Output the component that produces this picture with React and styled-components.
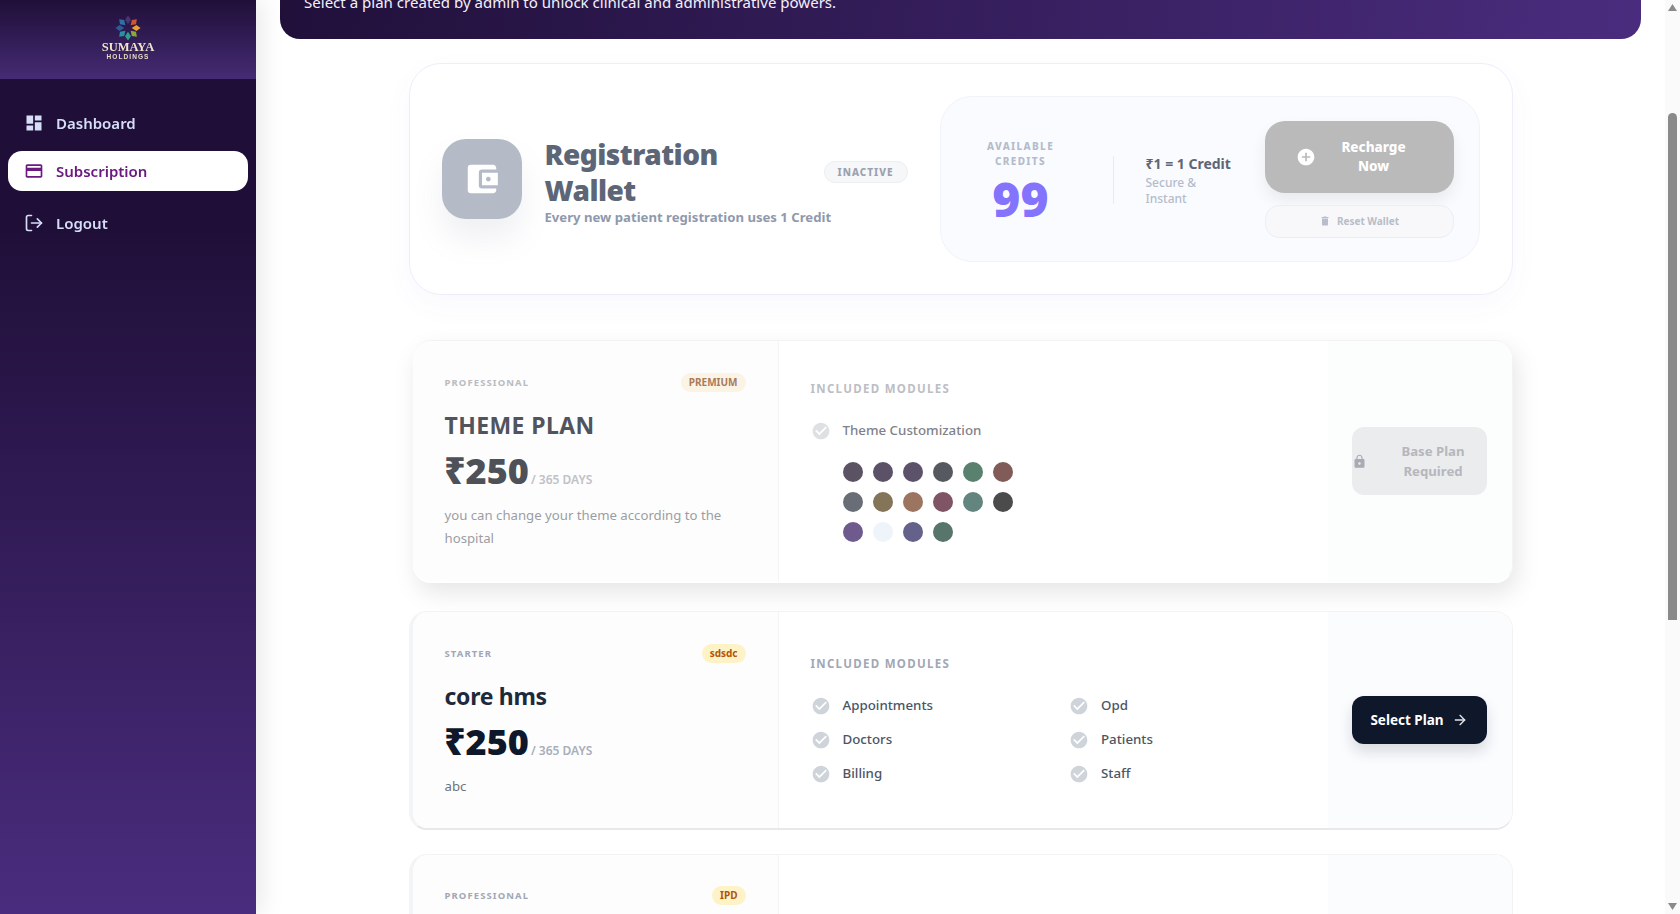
import React, { useLayoutEffect, useRef } from "react";
import styled, { createGlobalStyle } from "styled-components";
import { MdDashboard, MdCreditCard, MdAccountBalanceWallet, MdAddCircle, MdDelete, MdCheckCircle, MdLock } from "react-icons/md";
import { LogOut, ArrowRight } from "lucide-react";

const Global = createGlobalStyle`
  html, body { margin: 0; padding: 0; height: 100%; overflow: hidden; background: #fff; }
  * { box-sizing: border-box; }
  body { font-family: "Noto Sans", "Open Sans", "Liberation Sans", sans-serif; }
`;

const Shell = styled.div`
  display: flex;
  width: 1680px;
  height: 914px;
`;
const Sidebar = styled.aside`
  width: 256px;
  flex: none;
  background: linear-gradient(180deg, #1f0f38 0%, #1f0f38 25%, #4a2c7e 100%);
  box-shadow: 4px 0 24px rgba(0, 0, 0, 0.1);
  position: relative;
  z-index: 2;
`;
const Brand = styled.div`
  height: 79px;
  background: linear-gradient(180deg, #1f0f38 0%, #452b74 100%);
  display: flex;
  flex-direction: column;
  align-items: center;
  padding-top: 15px;
`;
const BrandName = styled.div`
  font-family: "Liberation Serif", serif;
  font-weight: 700;
  font-size: 12.5px;
  line-height: 13px;
  color: #f1e5c9;
`;
const BrandSub = styled.div`
  font-family: "Liberation Sans", sans-serif;
  font-weight: 700;
  font-size: 6.5px;
  line-height: 8px;
  letter-spacing: 1.1px;
  color: #e9dcc0;
  margin-top: -1px;
`;
const Nav = styled.nav`
  display: flex;
  flex-direction: column;
  padding: 24px 8px 0;
`;
const NavItem = styled.div`
  display: flex;
  align-items: center;
  gap: 12px;
  height: 40px;
  padding-left: 16px;
  border-radius: 14px;
  font-size: 15px;
  font-weight: 600;
  margin-bottom: ${(p) => p.$mb || 0}px;
  color: ${(p) => (p.$active ? "#6b1a80" : "#d6def8")};
  background: ${(p) => (p.$active ? "#fff" : "transparent")};
  svg { flex: none; }
`;
const Main = styled.main`
  flex: 1;
  min-width: 0;
  height: 914px;
  overflow-y: scroll;
  scrollbar-width: none;
  padding: 24px 24px 0;
  background: #fff;
`;
const ScrollRail = styled.div`
  width: 15px;
  flex: none;
  height: 914px;
  background: #fafafa;
  display: flex;
  flex-direction: column;
  align-items: center;
  color: #8a8a8a;
  padding-top: 4px;
`;
const ScrollThumb = styled.div`
  width: 9px;
  height: 507px;
  margin-top: 102px;
  margin-bottom: 283px;
  border-radius: 5px 5px 0 0 / 5px 5px 2px 2px;
  background: #8a8a8a;
`;
const Arrow = ({ down }) => (
  <svg width="9" height="7" viewBox="0 0 9 7" fill="currentColor">
    <path d={down ? "M0 0H9L4.5 7Z" : "M4.5 0L9 7H0Z"} />
  </svg>
);
const Banner = styled.section`
  height: 192px;
  border-radius: 20px;
  background: linear-gradient(100deg, #1f0f38 0%, #4a2c7e 100%);
  display: flex;
  align-items: flex-end;
  padding: 0 24px 26px;
  color: #f3f0fb;
  font-size: 15.05px;
  line-height: 22px;
  margin-bottom: 24px;
`;
const Column = styled.div`
  width: 1104px;
  margin: 0 auto;
  padding-bottom: 60px;
`;
const WalletCard = styled.section`
  height: 232px;
  border: 1px solid #eceffb;
  border-radius: 32px;
  background: #fff;
  box-shadow: 0 10px 30px rgba(99, 102, 241, 0.04);
  display: flex;
  align-items: center;
  justify-content: space-between;
  padding: 0 32px;
  margin-bottom: 45px;
`;
const WalletLeft = styled.div`
  display: flex;
  align-items: center;
  width: 466px;
`;
const WalletIcon = styled.div`
  width: 80px;
  height: 80px;
  flex: none;
  border-radius: 24px;
  background: #b4bac6;
  color: #fff;
  display: flex;
  align-items: center;
  justify-content: center;
  margin-right: 23px;
  box-shadow: 0 20px 30px rgba(120, 130, 160, 0.12);
`;
const WalletText = styled.div`
  flex: 1;
  min-width: 0;
  padding-top: 3px;
`;
const WalletHead = styled.div`
  display: flex;
  align-items: center;
  justify-content: space-between;
`;
const WalletTitle = styled.h2`
  margin: 0;
  font-size: 28px;
  line-height: 36px;
  font-weight: 900;
  letter-spacing: -0.5px;
  color: #5d6677;
  width: 200px;
`;
const InactivePill = styled.span`
  border: 1px solid #eceef2;
  background: #f6f7f9;
  border-radius: 999px;
  color: #9aa1b0;
  font-size: 10px;
  font-weight: 800;
  letter-spacing: 1px;
  padding: 3px 13px;
  line-height: 14px;
`;
const WalletSub = styled.div`
  font-size: 13.15px;
  line-height: 18px;
  font-weight: 700;
  color: #8f99ad;
`;
const CreditBox = styled.div`
  width: 540px;
  height: 166px;
  border: 1px solid #f1f3fa;
  border-radius: 32px;
  background: #fafbfe;
  display: flex;
  align-items: center;
  padding: 0 25px 0 32px;
`;
const Available = styled.div`
  width: 96px;
  text-align: center;
  flex: none;
  padding-top: 4px;
`;
const AvailableLabel = styled.div`
  font-size: 10px;
  line-height: 15px;
  font-weight: 800;
  letter-spacing: 1.35px;
  color: #b4bccc;
`;
const CreditValue = styled.div`
  font-size: 48px;
  line-height: 48px;
  font-weight: 900;
  color: #8473fc;
  margin-top: 6px;
`;
const Divider = styled.div`
  width: 1px;
  height: 48px;
  background: #e8eaf1;
  margin: 2px 32px 0 44px;
  flex: none;
`;
const Rate = styled.div`
  width: 119px;
  flex: none;
  padding-top: 3px;
`;
const RateTitle = styled.div`
  font-size: 14px;
  line-height: 20px;
  font-weight: 700;
  color: #5d6677;
`;
const RateSub = styled.div`
  font-size: 12px;
  line-height: 16px;
  font-weight: 500;
  color: #b4bccc;
  width: 70px;
  margin-top: 1px;
`;
const WalletActions = styled.div`
  margin-left: auto;
  width: 190px;
  display: flex;
  flex-direction: column;
  gap: 12px;
`;
const RechargeButton = styled.button`
  height: 72px;
  border: 0;
  border-radius: 20px;
  background: #bababa;
  color: #fff;
  font: 800 13.5px/19px "Noto Sans", sans-serif;
  display: flex;
  align-items: center;
  justify-content: flex-start;
  gap: 18px;
  padding: 0 0 0 31px;
  box-shadow: 0 8px 16px rgba(0, 0, 0, 0.07);
  svg { flex: none; }
  span { width: 80px; text-align: center; }
`;
const ResetButton = styled.button`
  height: 33px;
  border: 1px solid #eceef3;
  border-radius: 14px;
  background: #f8f8fa;
  color: #b8bdc9;
  font: 700 10px/15px "Noto Sans", sans-serif;
  display: flex;
  align-items: center;
  justify-content: center;
  gap: 6px;
`;
const PlanList = styled.div`
  display: flex;
  flex-direction: column;
  gap: 24px;
`;
const PlanCard = styled.article`
  display: grid;
  grid-template-columns: 366px 1fr 184px;
  border-radius: 18px;
  background: #fff;
  border: 1px solid #f3f3f5;
  border-left: ${(p) => (p.$locked ? "0" : "4px solid #f3f4f6")};
  border-bottom: 2px solid ${(p) => (p.$locked ? "#fff" : "#e8e8ea")};
  height: ${(p) => p.$h}px;
  overflow: hidden;
`;
const PlanShadow = styled.div`
  border-radius: 18px;
  box-shadow: 4px 10px 24px rgba(0, 0, 0, 0.1);
  margin: 0 0 4px 4px;
`;
const PlanInfo = styled.div`
  background: #fdfdfd;
  border-right: 1px solid #f4f4f6;
  padding: ${(p) => p.$pt || 32}px 32px 0 32px;
`;
const InfoTop = styled.div`
  display: flex;
  align-items: center;
  justify-content: space-between;
  height: 19px;
`;
const Tier = styled.span`
  font-size: 9.5px;
  font-weight: 700;
  letter-spacing: 1.1px;
  color: ${(p) => (p.$locked ? "#b9bbc1" : "#a1a7b5")};
`;
const Tag = styled.span`
  height: 19px;
  border-radius: 999px;
  padding: 0 8px;
  font-size: 10px;
  line-height: 19px;
  font-weight: 700;
  background: ${(p) => (p.$locked ? "#fbf4e4" : "#fef3c7")};
  color: ${(p) => (p.$locked ? "#a97a5a" : "#b45309")};
`;
const PlanName = styled.h3`
  margin: 17px 0 0;
  font-size: 23px;
  line-height: 32px;
  font-weight: 700;
  letter-spacing: ${(p) => (p.$locked ? "0.4px" : "-0.3px")};
  color: ${(p) => (p.$locked ? "#51545c" : "#1e293b")};
`;
const PriceRow = styled.div`
  display: flex;
  align-items: baseline;
  gap: 2px;
  margin-top: 4px;
`;
const Price = styled.span`
  font-size: 36px;
  line-height: 52px;
  font-weight: 900;
  color: ${(p) => (p.$locked ? "#4e5158" : "#0f172a")};
`;
const Per = styled.span`
  font-size: 12px;
  font-weight: 600;
  color: ${(p) => (p.$locked ? "#bfc1c6" : "#a9aebb")};
`;
const Desc = styled.p`
  margin: 7px 0 0;
  font-size: 13.2px;
  line-height: 22.5px;
  color: ${(p) => (p.$locked ? "#9b9da3" : "#6b7280")};
`;
const Modules = styled.div`
  padding: 0 32px;
  display: flex;
  flex-direction: column;
  justify-content: center;
`;
const ModulesHead = styled.div`
  font-size: 11.5px;
  line-height: 16px;
  font-weight: 700;
  letter-spacing: 1.3px;
  color: ${(p) => (p.$locked ? "#bcbec4" : "#a1a7b5")};
  margin-bottom: 22px;
`;
const ModuleGrid = styled.div`
  display: grid;
  grid-template-columns: 1fr 1fr;
  gap: 12px 32px;
`;
const Module = styled.div`
  display: flex;
  align-items: center;
  gap: 12px;
  font-size: 13.3px;
  line-height: 22px;
  font-weight: 500;
  color: ${(p) => (p.$locked ? "#7f8289" : "#4b5563")};
  svg { flex: none; margin-top: 2px; color: ${(p) => (p.$locked ? "#dfe0e3" : "#cfd3da")}; }
`;
const Swatches = styled.div`
  display: grid;
  grid-template-columns: repeat(6, 20px);
  gap: 10px;
  margin: 21px 0 0 32px;
`;
const Swatch = styled.span`
  width: 20px;
  height: 20px;
  border-radius: 50%;
  background: ${(p) => p.$c};
`;
const PlanAction = styled.div`
  background: ${(p) => (p.$locked ? "#fcfdfd" : "#fbfcfe")};
  padding: 0 24px;
  display: flex;
  align-items: center;
`;
const LockedButton = styled.div`
  width: 135px;
  height: 68px;
  border-radius: 12px;
  background: #ebecee;
  color: #b5b7bd;
  font-size: 13.2px;
  line-height: 20px;
  font-weight: 700;
  display: flex;
  align-items: center;
  svg { flex: none; color: #a9abb2; }
  span { flex: 1; text-align: center; padding: 0 6px 0 19px; }
`;
const SelectButton = styled.button`
  width: 135px;
  height: 48px;
  border: 0;
  border-radius: 12px;
  background: #0f172a;
  color: #fff;
  font: 700 13.5px/20px "Noto Sans", sans-serif;
  display: flex;
  align-items: center;
  justify-content: center;
  gap: 8px;
  box-shadow: 0 8px 14px rgba(15, 23, 42, 0.14);
  svg { color: #e2e4e8; }
`;

const petals = ["#4a3570", "#cf5430", "#eba12b", "#8aa83a", "#2f9f8c", "#2b8ea3", "#2a5e93", "#2c70a8"];
const Logo = () => (
  <svg width="26" height="26" viewBox="-14 -14 28 28">
    {petals.map((c, i) => (
      <path key={i} d="M0 -13.5 L3.2 -9 L0 -4 L-3.2 -9 Z" fill={c} transform={`rotate(${i * 45})`} />
    ))}
  </svg>
);

const swatches = ["#5b5264", "#5c5268", "#5c526a", "#565960", "#5a8070", "#815b58", "#696e76", "#847559", "#9c7560", "#7f5565", "#64857f", "#4b4b4b", "#6f5a8e", "#eef4fa", "#64618a", "#57756a"];
const core = ["Appointments", "Opd", "Doctors", "Patients", "Billing", "Staff"];
const ipd = ["Ipd", "Beds", "Wards", "Nursing", "Pharmacy", "Laboratory", "Discharge", "Insurance", "Reports", "Inventory"];

const ModuleItem = ({ name, locked }) => (
  <Module $locked={locked}>
    <MdCheckCircle size={20} />
    {name}
  </Module>
);

export default function App() {
  const mainRef = useRef(null);
  useLayoutEffect(() => {
    if (mainRef.current) mainRef.current.scrollTop = 177;
  }, []);
  return (
    <Shell>
      <Global />
      <Sidebar>
        <Brand>
          <Logo />
          <BrandName>SUMAYA</BrandName>
          <BrandSub>HOLDINGS</BrandSub>
        </Brand>
        <Nav>
          <NavItem $mb={8}><MdDashboard size={20} />Dashboard</NavItem>
          <NavItem $active $mb={12}><MdCreditCard size={20} />Subscription</NavItem>
          <NavItem><LogOut size={20} />Logout</NavItem>
        </Nav>
      </Sidebar>
      <Main ref={mainRef}>
        <Banner>Select a plan created by admin to unlock clinical and administrative powers.</Banner>
        <Column>
          <WalletCard>
            <WalletLeft>
              <WalletIcon><MdAccountBalanceWallet size={38} /></WalletIcon>
              <WalletText>
                <WalletHead>
                  <WalletTitle>Registration Wallet</WalletTitle>
                  <InactivePill>INACTIVE</InactivePill>
                </WalletHead>
                <WalletSub>Every new patient registration uses 1 Credit</WalletSub>
              </WalletText>
            </WalletLeft>
            <CreditBox>
              <Available>
                <AvailableLabel>AVAILABLE CREDITS</AvailableLabel>
                <CreditValue>99</CreditValue>
              </Available>
              <Divider />
              <Rate>
                <RateTitle>₹1 = 1 Credit</RateTitle>
                <RateSub>Secure & Instant</RateSub>
              </Rate>
              <WalletActions>
                <RechargeButton><MdAddCircle size={20} /><span>Recharge Now</span></RechargeButton>
                <ResetButton><MdDelete size={12} />Reset Wallet</ResetButton>
              </WalletActions>
            </CreditBox>
          </WalletCard>
          <PlanList>
            <PlanShadow>
              <PlanCard $locked $h={243}>
                <PlanInfo>
                  <InfoTop><Tier $locked>PROFESSIONAL</Tier><Tag $locked>PREMIUM</Tag></InfoTop>
                  <PlanName $locked>THEME PLAN</PlanName>
                  <PriceRow><Price $locked>₹250</Price><Per $locked>/ 365 DAYS</Per></PriceRow>
                  <Desc $locked>you can change your theme according to the hospital</Desc>
                </PlanInfo>
                <Modules>
                  <ModulesHead $locked>INCLUDED MODULES</ModulesHead>
                  <ModuleItem name="Theme Customization" locked />
                  <Swatches>
                    {swatches.map((c) => <Swatch key={c} $c={c} />)}
                  </Swatches>
                </Modules>
                <PlanAction $locked>
                  <LockedButton><MdLock size={15} /><span>Base Plan Required</span></LockedButton>
                </PlanAction>
              </PlanCard>
            </PlanShadow>
            <PlanCard $h={219}>
              <PlanInfo>
                <InfoTop><Tier>STARTER</Tier><Tag>sdsdc</Tag></InfoTop>
                <PlanName>core hms</PlanName>
                <PriceRow><Price>₹250</Price><Per>/ 365 DAYS</Per></PriceRow>
                <Desc>abc</Desc>
              </PlanInfo>
              <Modules>
                <ModulesHead>INCLUDED MODULES</ModulesHead>
                <ModuleGrid>{core.map((m) => <ModuleItem key={m} name={m} />)}</ModuleGrid>
              </Modules>
              <PlanAction>
                <SelectButton>Select Plan <ArrowRight size={16} /></SelectButton>
              </PlanAction>
            </PlanCard>
            <PlanCard $h={380}>
              <PlanInfo $pt={31}>
                <InfoTop><Tier>PROFESSIONAL</Tier><Tag>IPD</Tag></InfoTop>
                <PlanName>ipd plan</PlanName>
                <PriceRow><Price>₹250</Price><Per>/ 365 DAYS</Per></PriceRow>
              </PlanInfo>
              <Modules>
                <ModulesHead>INCLUDED MODULES</ModulesHead>
                <ModuleGrid>{ipd.map((m) => <ModuleItem key={m} name={m} />)}</ModuleGrid>
              </Modules>
              <PlanAction>
                <SelectButton>Select Plan <ArrowRight size={16} /></SelectButton>
              </PlanAction>
            </PlanCard>
          </PlanList>
        </Column>
      </Main>
      <ScrollRail>
        <Arrow />
        <ScrollThumb />
        <Arrow down />
      </ScrollRail>
    </Shell>
  );
}
